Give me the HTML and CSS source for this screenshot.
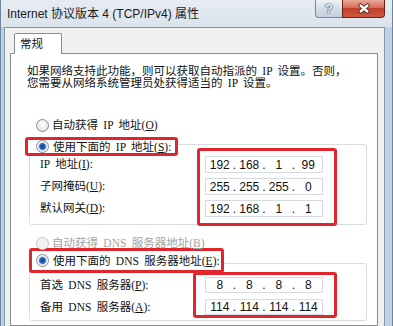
FILE: index.html
```html
<!DOCTYPE html>
<html>
  <head>
    <meta charset="UTF-8" />
    <title>Internet 协议版本 4 (TCP/IPv4) 属性</title>
    <link rel="stylesheet" href="styles.css">
  </head>
  <body>
    <div class="window">
      <div class="titlebar">
        <span class="title">Internet 协议版本 4 (TCP/IPv4) 属性</span>
        <div class="caption">
          <span class="cap-btn cap-help">?</span>
          <span class="cap-btn cap-close">
            <svg width="14" height="11" viewBox="0 0 14 11">
              <path d="M3.5 2.5 L10.5 8.5 M10.5 2.5 L3.5 8.5" stroke="#4a1812" stroke-width="4.2" stroke-linecap="round" fill="none" />
              <path d="M3.5 2.5 L10.5 8.5 M10.5 2.5 L3.5 8.5" stroke="#fff" stroke-width="2.4" stroke-linecap="round" fill="none" />
            </svg>
          </span>
        </div>
      </div>

      <div class="client">
        <div class="tabs">
          <div class="tab">常规</div>
        </div>

        <div class="panel">
          <p class="intro">如果网络支持此功能，则可以获取自动指派的 IP 设置。否则，<br>您需要从网络系统管理员处获得适当的 IP 设置。</p>

          <div class="radio-row">
            <span class="radio"></span>
            <span>自动获得 IP 地址(<u>O</u>)</span>
          </div>

          <div class="group group-ip">
            <div class="group-head">
              <span class="radio on"></span>
              <span>使用下面的 IP 地址(<u>S</u>):</span>
            </div>
            <div class="fields">
              <div class="labels">
                <div class="label">IP 地址(<u>I</u>):</div>
                <div class="label">子网掩码(<u>U</u>):</div>
                <div class="label">默认网关(<u>D</u>):</div>
              </div>
              <div class="mark mark-ip">
                <div class="ip"><span>192</span><i>.</i><span>168</span><i>.</i><span>1</span><i>.</i><span>99</span></div>
                <div class="ip"><span>255</span><i>.</i><span>255</span><i>.</i><span>255</span><i>.</i><span>0</span></div>
                <div class="ip"><span>192</span><i>.</i><span>168</span><i>.</i><span>1</span><i>.</i><span>1</span></div>
              </div>
            </div>
          </div>

          <div class="radio-row disabled">
            <span class="radio off"></span>
            <span>自动获得 DNS 服务器地址(<u>B</u>)</span>
          </div>

          <div class="group group-dns">
            <div class="group-head">
              <span class="radio on"></span>
              <span>使用下面的 DNS 服务器地址(<u>E</u>):</span>
            </div>
            <div class="fields">
              <div class="labels">
                <div class="label">首选 DNS 服务器(<u>P</u>):</div>
                <div class="label">备用 DNS 服务器(<u>A</u>):</div>
              </div>
              <div class="mark mark-dns">
                <div class="ip"><span>8</span><i>.</i><span>8</span><i>.</i><span>8</span><i>.</i><span>8</span></div>
                <div class="ip"><span>114</span><i>.</i><span>114</span><i>.</i><span>114</span><i>.</i><span>114</span></div>
              </div>
            </div>
          </div>
        </div>
      </div>
    </div>
  </body>
</html>
```

FILE: styles.css
```css
body {
  margin: 0;
  width: 393px;
  height: 326px;
  overflow: hidden;
  font-family: 'Liberation Serif', 'Noto Sans CJK SC', serif;
  font-size: 11.5px;
  word-spacing: 2.5px;
  color: #111;
}

.window {
  height: 326px;
  box-sizing: border-box;
  display: flex;
  flex-direction: column;
  background: linear-gradient(#e6ecf2 0, #dbe3ec 27px, #bdd1e7 27px);
  border-left: 1px solid #71849b;
  border-right: 1px solid #71849b;
}

/* title bar */
.titlebar {
  height: 27px;
  flex: none;
  display: flex;
  align-items: flex-start;
  padding-left: 6px;
}

.title {
  font-family: 'Liberation Sans', 'Noto Sans CJK SC', sans-serif;
  font-size: 12px;
  line-height: 28px;
  word-spacing: normal;
  color: #1b1b1b;
}

.caption {
  margin-left: auto;
  margin-right: 7px;
  display: flex;
}

.cap-btn {
  height: 18px;
  box-sizing: border-box;
  display: flex;
  align-items: center;
  justify-content: center;
}

.cap-help {
  width: 27px;
  border: 1px solid #7b8899;
  border-top: none;
  border-right: none;
  border-radius: 0 0 0 4px;
  background: linear-gradient(#eef2f7, #d5dee9 50%, #c2cfdf);
  color: #eef2f7;
  font: bold 13px 'Liberation Sans', sans-serif;
  text-shadow: 0 0 1px #2e3f55, 0 0 2px #2e3f55;
}

.cap-close {
  width: 43px;
  border: 1px solid #6a2219;
  border-top: none;
  border-radius: 0 0 4px 0;
  background: linear-gradient(#eaa999, #d66d58 45%, #c3412b 50%, #cf5840);
}

/* dialog body */
.client {
  flex: 1;
  min-height: 0;
  margin: 0 7px 0 3px;
  border: 1px solid #8797ab;
  border-bottom: none;
  background: #f0f0f0;
  padding: 5px 6px 0 5px;
  display: flex;
  flex-direction: column;
}

.tabs {
  display: flex;
  padding-left: 4px;
}

.tab {
  width: 48px;
  height: 21px;
  box-sizing: border-box;
  border: 1px solid #898c95;
  border-bottom: none;
  border-radius: 2px 2px 0 0;
  background: #fff;
  margin-bottom: -1px;
  position: relative;
  z-index: 1;
  padding-left: 5px;
  line-height: 19px;
  font-family: 'Noto Sans CJK SC', sans-serif;
}

.panel {
  flex: 1;
  background: #fff;
  border: 1px solid #898c95;
  padding: 11px 10px 0 16px;
}

.intro {
  margin: 0;
  line-height: 12px;
}

.radio-row {
  display: flex;
  align-items: center;
  gap: 3px;
  height: 14px;
  line-height: 14px;
  margin: 29px 0 0 9px;
}

.radio-row.disabled {
  margin-top: 11px;
  color: #a3a3a3;
}

.radio {
  width: 13px;
  height: 13px;
  box-sizing: border-box;
  flex: none;
  border-radius: 50%;
  border: 1px solid #8a8c8e;
  background: radial-gradient(circle at 50% 40%, #fff, #d8d9db);
}

.radio.on {
  background: radial-gradient(circle, #1b4c9c 0 1.8px, #4d88d6 3.2px, #e4ecf6 4.2px, #f6f6f6 5px, #dcdcdc);
}

.radio.off {
  border-color: #c5c5c5;
  background: #f3f3f3;
}

/* group boxes */
.group {
  margin: 12px 0 0 2px;
  border: 1px solid #d8dde2;
  border-radius: 3px;
  padding: 0 0 7px 10px;
}

.group-dns {
  margin-top: 13px;
  padding-bottom: 2px;
}

.group-head {
  display: flex;
  align-items: center;
  gap: 4px;
  width: fit-content;
  border: 3px solid #e0252c;
  border-radius: 3px;
  background: #fff;
  line-height: 12px;
}

.group-ip .group-head {
  margin: -8px 0 0 -15px;
  padding: 0 4px 0 8px;
}

.group-dns .group-head {
  margin: -16px 0 0 -11px;
  padding: 3px 1px 3px 4px;
}

.fields {
  display: flex;
  align-items: flex-start;
}

.labels {
  width: 153px;
  display: flex;
  flex-direction: column;
}

.group-ip .labels {
  gap: 5px;
}

.group-ip .label {
  height: 17px;
  line-height: 17px;
}

.group-dns .labels {
  gap: 6px;
  padding-top: 4px;
}

.group-dns .label {
  height: 16px;
  line-height: 16px;
}

/* red marks round the address fields */
.mark {
  border: 3px solid #e0252c;
  border-radius: 3px;
  display: flex;
  flex-direction: column;
}

.mark-ip {
  margin: -8px 0 -9px 4px;
  padding: 5px 11px 6px 5px;
  gap: 5px;
}

.mark-dns {
  margin-top: -1px;
  padding: 2px 11px 0 9px;
  gap: 6px;
}

.ip {
  width: 118px;
  box-sizing: border-box;
  border: 1px solid #d7dadf;
  background: #fff;
  display: flex;
  align-items: center;
  padding: 0 1px;
  font-family: 'Liberation Sans', sans-serif;
  font-size: 12px;
  word-spacing: normal;
  color: #111;
}

.mark-ip .ip {
  height: 17px;
}

.mark-dns .ip {
  height: 16px;
}

.ip span {
  width: 26px;
  text-align: center;
}

.ip i {
  width: 4px;
  font-style: normal;
  text-align: center;
}
```
